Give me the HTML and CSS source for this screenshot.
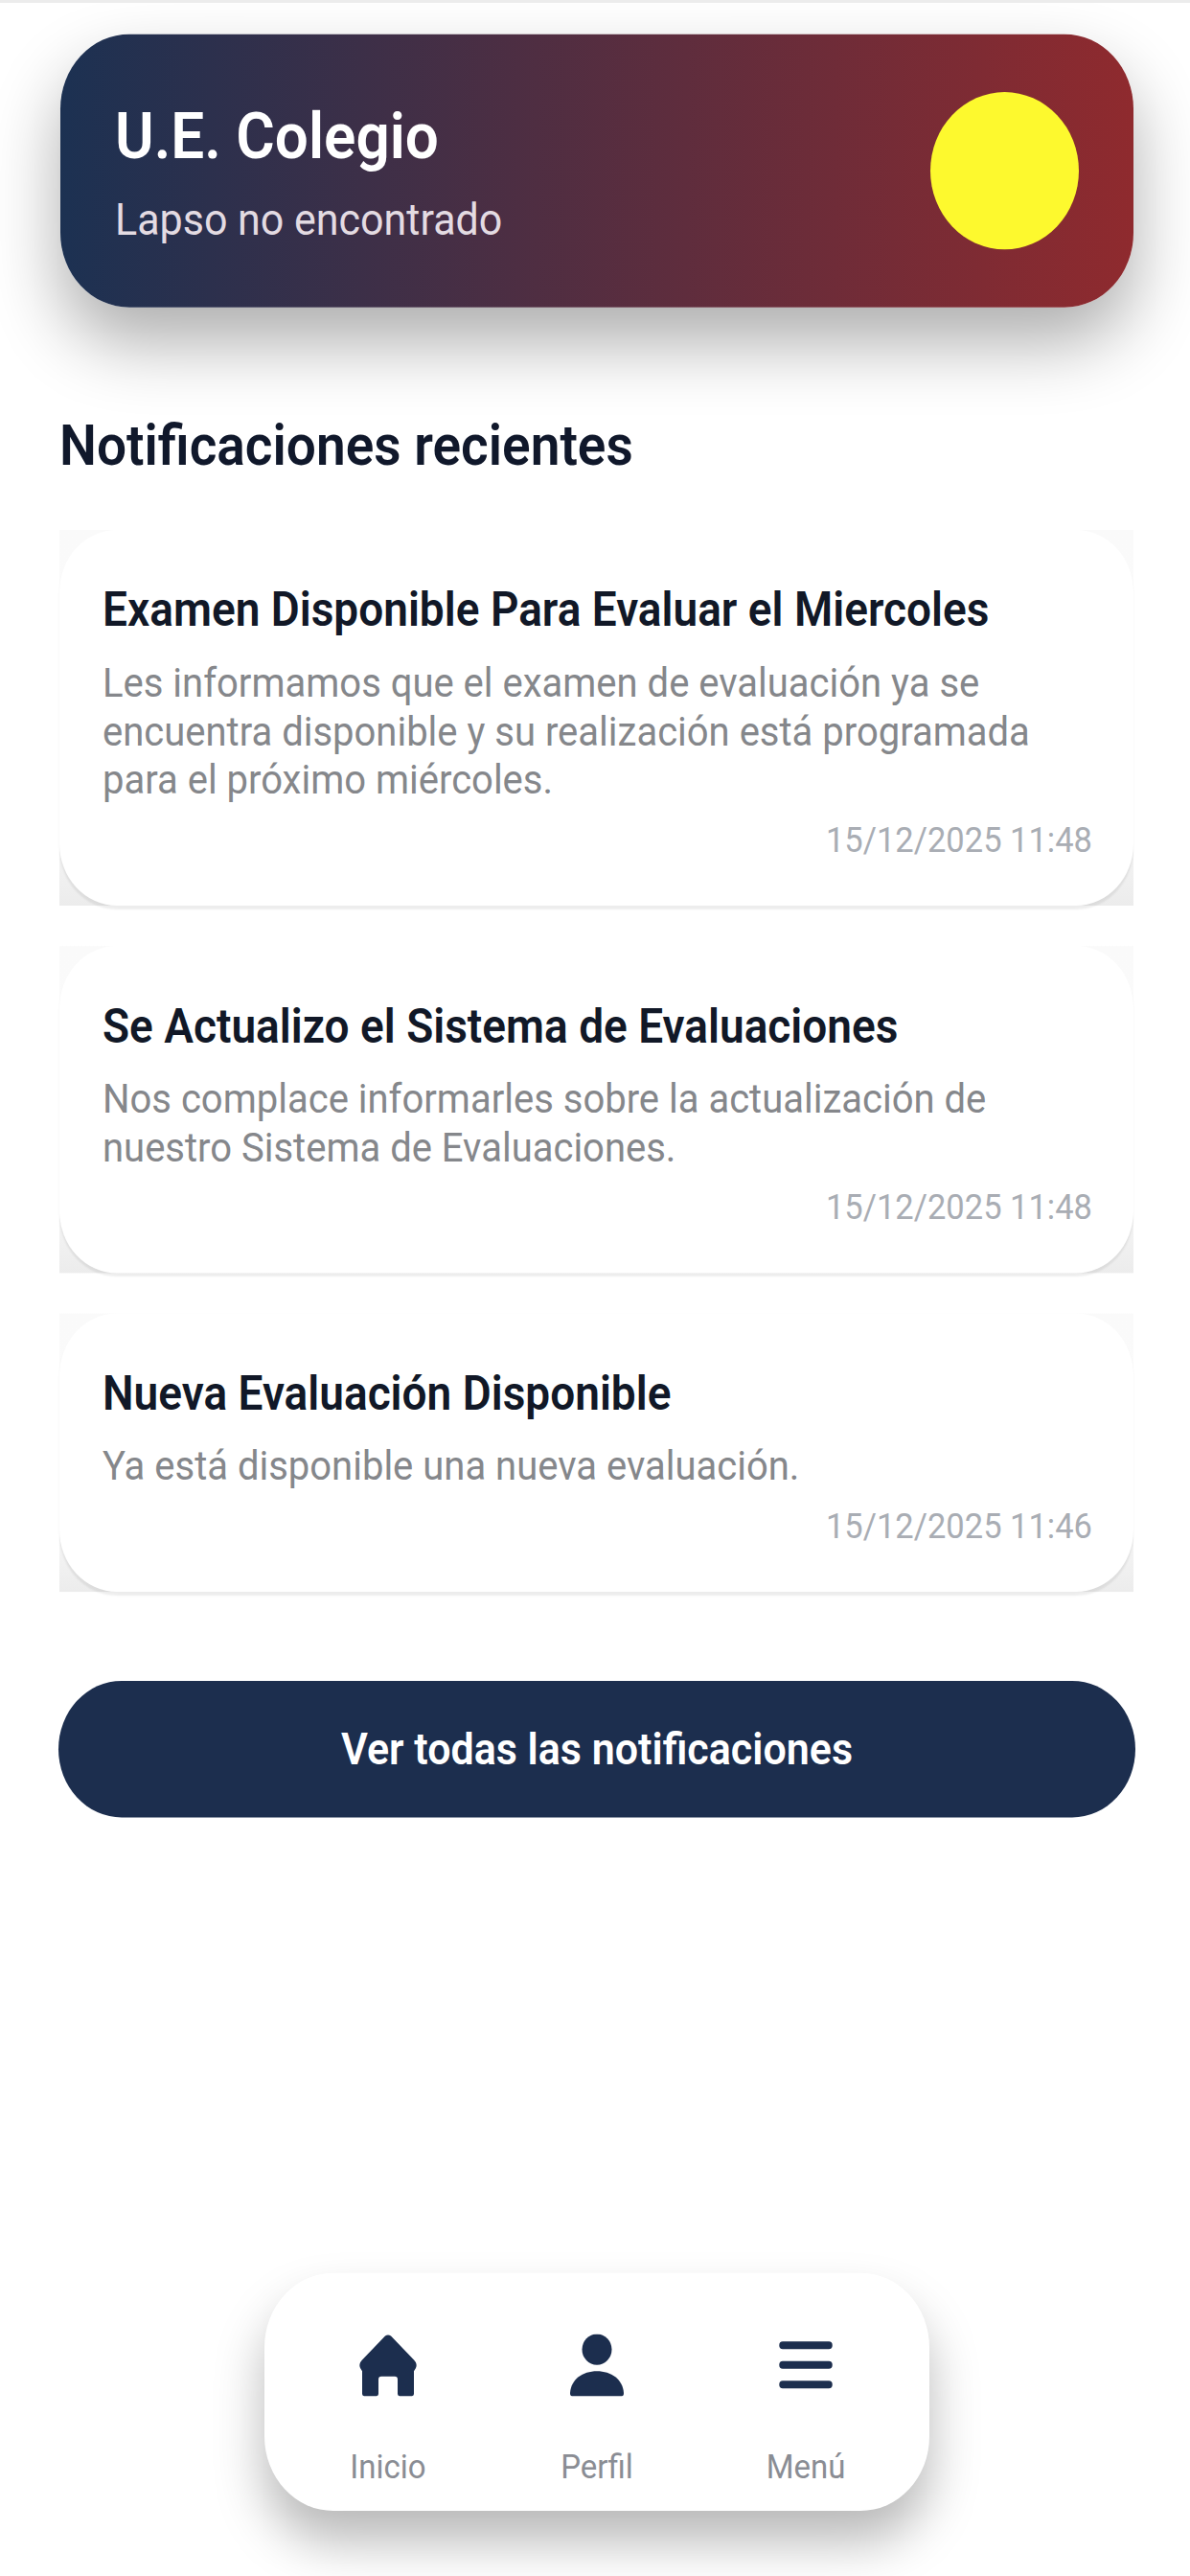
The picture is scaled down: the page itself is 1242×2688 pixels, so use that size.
FILE: index.html
```html
<!DOCTYPE html>
<html lang="es">
<head>
    <meta charset="UTF-8">
    <meta name="viewport" content="width=device-width, initial-scale=1.0">
    <title>U.E. Colegio - Inicio</title>
    <link rel="stylesheet" href="styles.css">
</head>
<body>
    <div class="app">
        <header class="school-card">
            <div>
                <h1>U.E. Colegio</h1>
                <p>Lapso no encontrado</p>
            </div>
            <div class="school-logo"></div>
        </header>

        <h2>Notificaciones recientes</h2>

        <section class="notifications">
            <div class="card-back">
                <article class="card">
                    <h3>Examen Disponible Para Evaluar el Miercoles</h3>
                    <p>Les informamos que el examen de evaluación ya se encuentra disponible y su realización está programada para el próximo miércoles.</p>
                    <time>15/12/2025 11:48</time>
                </article>
            </div>
            <div class="card-back">
                <article class="card">
                    <h3>Se Actualizo el Sistema de Evaluaciones</h3>
                    <p>Nos complace informarles sobre la actualización de nuestro Sistema de Evaluaciones.</p>
                    <time>15/12/2025 11:48</time>
                </article>
            </div>
            <div class="card-back">
                <article class="card">
                    <h3>Nueva Evaluación Disponible</h3>
                    <p>Ya está disponible una nueva evaluación.</p>
                    <time>15/12/2025 11:46</time>
                </article>
            </div>
        </section>

        <a href="#" class="btn-all">Ver todas las notificaciones</a>

        <nav class="bottom-nav">
            <a href="#" class="nav-item">
                <svg class="nav-icon" viewBox="0 0 62 62"><path d="M28 2 Q31 0 34 2 L58 25 Q62 29 60 33 L58 36 V58 Q58 60 56 60 H43 Q41 60 41 58 V44 Q41 41 38 41 H24 Q21 41 21 44 V58 Q21 60 19 60 H6 Q4 60 4 58 V36 L2 33 Q0 29 4 25 Z"/></svg>
                <span>Inicio</span>
            </a>
            <a href="#" class="nav-item">
                <svg class="nav-icon" viewBox="0 0 62 62"><ellipse cx="31" cy="15" rx="15.5" ry="15"/><path d="M5 60 Q3 60 3 57 C4 44 16 36 31 36 C46 36 58 44 59 57 Q59 60 57 60 Z"/></svg>
                <span>Perfil</span>
            </a>
            <a href="#" class="nav-item">
                <svg class="nav-icon" viewBox="0 0 62 62"><path class="menu-lines" d="M7 11 H55 M7 30 H55 M7 49 H55"/></svg>
                <span>Menú</span>
            </a>
        </nav>
    </div>
</body>
</html>
```

FILE: styles.css
```css
* {
    box-sizing: border-box;
}

html, body {
    margin: 0;
    height: 100%;
    background: #fff;
    overflow: hidden;
}

body {
    font-family: 'Roboto', sans-serif;
    border-top: 3px solid #ececec;
}

/* la captura original esta algo estirada en vertical */
.app {
    width: 1242px;
    height: 2489px;
    margin-top: -3px;
    padding: 33px 59px 0 62px;
    display: flex;
    flex-direction: column;
    transform: scaleY(1.08);
    transform-origin: top left;
}

.school-card {
    height: 264px;
    margin-left: 1px;
    padding: 3px 57px 0;
    border-radius: 72px;
    background: linear-gradient(90deg, #1c3152, #8f2a2e);
    box-shadow: 0 34px 70px rgba(0, 0, 0, 0.32);
    color: #fff;
    display: flex;
    align-items: center;
    justify-content: space-between;
}

.school-card h1 {
    margin: 0 0 24px;
    font-size: 62px;
    line-height: 66px;
    font-weight: 600;
}

.school-card p {
    margin: 0;
    font-size: 43px;
    line-height: 46px;
    color: #e3dbe2;
}

.school-logo {
    width: 155px;
    height: 152px;
    margin-top: -3px;
    border-radius: 50%;
    background: #fdf92e;
}

h2 {
    margin: 101px 0 50px;
    font-size: 55px;
    line-height: 64px;
    font-weight: 600;
    color: #10182b;
}

.notifications {
    display: flex;
    flex-direction: column;
    gap: 39px;
}

/* esquinas grises que asoman detras de la tarjeta */
.card-back {
    background: linear-gradient(180deg, #fafafa, #fbfbfb 70%, #ececec);
}

.card {
    padding: 49px 43px 43px 45px;
    border-radius: 60px;
    background: #fff;
    box-shadow: 0 3px 2px rgba(0, 0, 0, 0.07);
    display: flex;
    flex-direction: column;
}

.card h3 {
    margin: 0 0 19px;
    font-size: 46px;
    line-height: 56px;
    font-weight: 600;
    color: #111827;
}

.card p {
    margin: 0;
    font-size: 40px;
    line-height: 47px;
    color: #85878b;
}

.card time {
    margin-top: 13px;
    align-self: flex-end;
    font-size: 34.5px;
    line-height: 42px;
    color: #a9adb4;
}

.btn-all {
    margin: 86px -2px 0 -1px;
    height: 132px;
    border-radius: 66px;
    background: #1c2e4e;
    color: #fff;
    font-size: 43px;
    font-weight: 600;
    text-decoration: none;
    display: flex;
    align-items: center;
    justify-content: center;
}

.bottom-nav {
    margin: auto auto 63px 214px;
    width: 694px;
    height: 230px;
    padding-top: 59px;
    border-radius: 72px;
    background: #fff;
    box-shadow: 0 30px 50px rgba(0, 0, 0, 0.28);
    display: grid;
    grid-template-columns: repeat(3, 218px);
    justify-content: center;
}

.nav-item {
    color: #8a8d94;
    font-size: 33px;
    line-height: 40px;
    text-decoration: none;
    display: flex;
    flex-direction: column;
    align-items: center;
    gap: 46px;
}

.nav-icon {
    width: 62px;
    height: 62px;
    fill: #1c2e4e;
}

.menu-lines {
    fill: none;
    stroke: #1c2e4e;
    stroke-width: 7.5;
    stroke-linecap: round;
}
```
